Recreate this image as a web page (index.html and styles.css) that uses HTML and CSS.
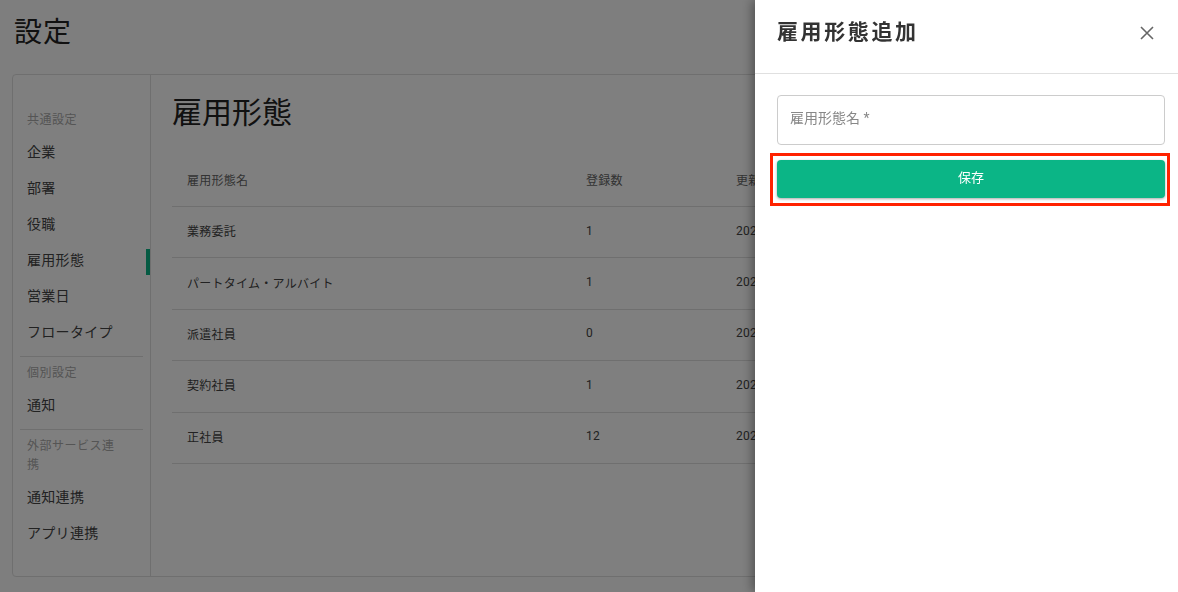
FILE: index.html
```html
<!DOCTYPE html>
<html lang="ja">
<head>
  <meta charset="UTF-8">
  <title>設定 - 雇用形態</title>
  <link rel="stylesheet" href="styles.css">
</head>
<body>
  <div class="page">
    <h1 class="page-title">設定</h1>

    <div class="settings-card">
      <nav class="side-nav">
        <div class="nav-label">共通設定</div>
        <a class="nav-item">企業</a>
        <a class="nav-item">部署</a>
        <a class="nav-item">役職</a>
        <a class="nav-item active">雇用形態</a>
        <a class="nav-item">営業日</a>
        <a class="nav-item">フロータイプ</a>
        <hr class="nav-divider">
        <div class="nav-label">個別設定</div>
        <a class="nav-item">通知</a>
        <hr class="nav-divider">
        <div class="nav-label">外部サービス連携</div>
        <a class="nav-item">通知連携</a>
        <a class="nav-item">アプリ連携</a>
      </nav>

      <main class="content">
        <h2 class="content-title">雇用形態</h2>
        <table class="type-table">
          <thead>
            <tr>
              <th class="col-name">雇用形態名</th>
              <th class="col-count">登録数</th>
              <th>更新日時</th>
            </tr>
          </thead>
          <tbody>
            <tr><td>業務委託</td><td>1</td><td>2023/01/12 10:24</td></tr>
            <tr><td>パートタイム・アルバイト</td><td>1</td><td>2023/01/12 10:24</td></tr>
            <tr><td>派遣社員</td><td>0</td><td>2023/01/12 10:24</td></tr>
            <tr><td>契約社員</td><td>1</td><td>2023/01/12 10:24</td></tr>
            <tr><td>正社員</td><td>12</td><td>2023/01/12 10:24</td></tr>
          </tbody>
        </table>
      </main>
    </div>
  </div>

  <div class="backdrop"></div>

  <aside class="drawer">
    <div class="drawer-header">
      <h3 class="drawer-title">雇用形態追加</h3>
      <button class="close-btn" aria-label="閉じる">
        <svg width="14" height="14" viewBox="0 0 14 14">
          <path d="M1 1 L13 13 M13 1 L1 13" stroke="#666" stroke-width="1.6" fill="none"/>
        </svg>
      </button>
    </div>
    <div class="drawer-body">
      <input class="text-field" type="text" placeholder="雇用形態名 *">
      <button class="save-btn">保存</button>
      <div class="highlight"></div>
    </div>
  </aside>
</body>
</html>
```

FILE: styles.css
```css
:root {
  --green: #0bb586;
  --border-color: #dfdfdf;
  --text-color: #333;
  --sub-text: #999;
}

body {
  margin: 0;
  background: #fdfdfd;
  font-family: Roboto, "Noto Sans CJK JP", sans-serif;
  color: var(--text-color);
  height: 592px;
  overflow: hidden;
}

.page {
  padding: 0 12px;
}

.page-title {
  margin: 0;
  height: 74px;
  line-height: 66px;
  padding-left: 2px;
  font-size: 28px;
  font-weight: 400;
  letter-spacing: 1px;
  color: #222;
}

.settings-card {
  display: flex;
  height: 501px;
  background: #fff;
  border: 1px solid var(--border-color);
  border-radius: 4px;
}

/* sidebar */
.side-nav {
  width: 137px;
  flex-shrink: 0;
  padding-top: 29px;
  border-right: 1px solid var(--border-color);
}

.nav-label {
  padding: 7px 30px 4px 14px;
  font-size: 12px;
  line-height: 19px;
  letter-spacing: 0.5px;
  color: #aaa;
}

.nav-item {
  display: block;
  position: relative;
  height: 36px;
  line-height: 36px;
  padding-left: 14px;
  font-size: 14px;
  letter-spacing: 0.3px;
  color: #444;
}

.nav-item.active::after {
  content: "";
  position: absolute;
  right: 0;
  top: 7px;
  width: 4px;
  height: 26px;
  background: var(--green);
}

.nav-divider {
  margin: 6px 7px 0 7px;
  border: none;
  border-top: 1px solid var(--border-color);
}

/* main */
.content {
  flex: 1;
  padding: 18px 0 0 21px;
}

.content-title {
  margin: 0 0 23px 0;
  line-height: 40px;
  font-size: 30px;
  font-weight: 400;
  color: #222;
}

.type-table {
  width: 960px;
  border-collapse: collapse;
  font-size: 12px;
  letter-spacing: 0.25px;
}

.type-table th {
  height: 47px;
  padding: 0 15px 3px;
  text-align: left;
  font-weight: 400;
  color: #666;
  border-bottom: 1px solid var(--border-color);
}

.type-table td {
  height: 47.4px;
  padding: 0 15px 3px;
  color: #444;
  border-bottom: 1px solid var(--border-color);
}

.col-name {
  width: 369px;
}

.col-count {
  width: 120px;
}

/* overlay + drawer */
.backdrop {
  position: fixed;
  inset: 0;
  background: rgba(0, 0, 0, 0.5);
}

.drawer {
  position: fixed;
  top: 0;
  right: 0;
  bottom: 0;
  width: 423px;
  background: #fff;
  box-shadow: -3px 0 10px rgba(0, 0, 0, 0.35);
}

.drawer-header {
  display: flex;
  align-items: center;
  justify-content: space-between;
  height: 73px;
  padding: 0 22px;
  border-bottom: 1px solid #e0e0e0;
}

.drawer-title {
  margin: 0 0 13px 0;
  font-size: 21px;
  font-weight: 700;
  letter-spacing: 2.6px;
  color: #333;
}

.close-btn {
  margin: 0 2px 7px 0;
  padding: 0;
  border: none;
  background: none;
  display: flex;
  cursor: pointer;
}

.drawer-body {
  position: relative;
  display: flex;
  flex-direction: column;
  gap: 15px;
  padding: 21px 13px 0 22px;
}

.text-field {
  height: 50px;
  box-sizing: border-box;
  padding: 0 12px 5px;
  border: 1px solid #ccc;
  border-radius: 4px;
  font-family: inherit;
  font-size: 14px;
  color: #333;
}

.text-field::placeholder {
  color: #888;
}

.save-btn {
  height: 38px;
  padding: 0 0 5px;
  border: none;
  border-radius: 4px;
  background: var(--green);
  color: #fff;
  font-family: inherit;
  font-size: 13px;
  box-shadow: 0 1px 3px rgba(0, 0, 0, 0.35);
  cursor: pointer;
}

.highlight {
  position: absolute;
  left: 15px;
  top: 79px;
  width: 394px;
  height: 47px;
  border: 3px solid #ff2200;
  pointer-events: none;
}
```
